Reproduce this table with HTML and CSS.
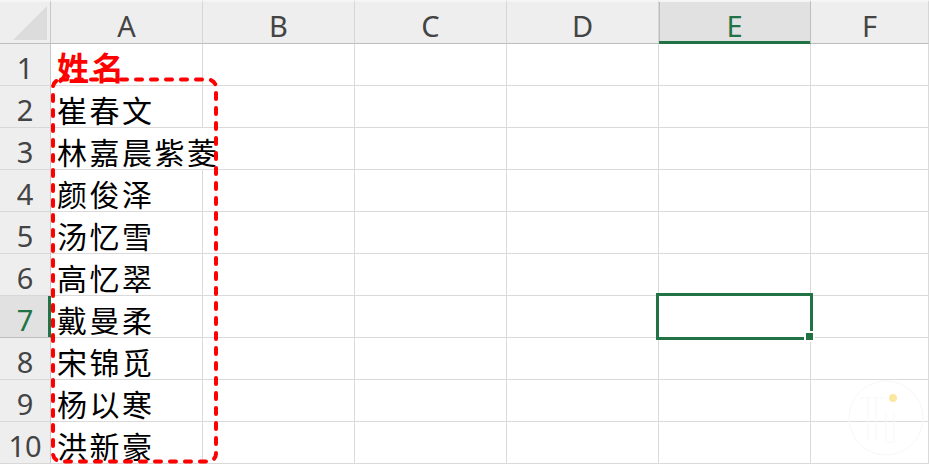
FILE: index.html
```html
<!DOCTYPE html>
<html lang="zh-CN">
<head>
<meta charset="utf-8">
<title>Sheet</title>
<link rel="stylesheet" href="styles.css">
</head>
<body>
<div class="sheet">
  <div class="grid">
    <div class="corner"><span class="tri"></span></div>
    <div class="colh">A</div>
    <div class="colh">B</div>
    <div class="colh">C</div>
    <div class="colh">D</div>
    <div class="colh colh-active">E</div>
    <div class="colh">F</div>

    <div class="rowh">1</div><div class="cell"><span class="title">姓名</span></div><div class="cell"></div><div class="cell"></div><div class="cell"></div><div class="cell"></div><div class="cell"></div>
    <div class="rowh">2</div><div class="cell"><span class="name">崔春文</span></div><div class="cell"></div><div class="cell"></div><div class="cell"></div><div class="cell"></div><div class="cell"></div>
    <div class="rowh">3</div><div class="cell cell-over"><span class="name">林嘉晨紫菱</span></div><div class="cell"></div><div class="cell"></div><div class="cell"></div><div class="cell"></div><div class="cell"></div>
    <div class="rowh">4</div><div class="cell"><span class="name">颜俊泽</span></div><div class="cell"></div><div class="cell"></div><div class="cell"></div><div class="cell"></div><div class="cell"></div>
    <div class="rowh">5</div><div class="cell"><span class="name">汤忆雪</span></div><div class="cell"></div><div class="cell"></div><div class="cell"></div><div class="cell"></div><div class="cell"></div>
    <div class="rowh">6</div><div class="cell"><span class="name">高忆翠</span></div><div class="cell"></div><div class="cell"></div><div class="cell"></div><div class="cell"></div><div class="cell"></div>
    <div class="rowh rowh-active">7</div><div class="cell"><span class="name">戴曼柔</span></div><div class="cell"></div><div class="cell"></div><div class="cell"></div><div class="cell"></div><div class="cell"></div>
    <div class="rowh">8</div><div class="cell"><span class="name">宋锦觅</span></div><div class="cell"></div><div class="cell"></div><div class="cell"></div><div class="cell"></div><div class="cell"></div>
    <div class="rowh">9</div><div class="cell"><span class="name">杨以寒</span></div><div class="cell"></div><div class="cell"></div><div class="cell"></div><div class="cell"></div><div class="cell"></div>
    <div class="rowh">10</div><div class="cell"><span class="name">洪新豪</span></div><div class="cell"></div><div class="cell"></div><div class="cell"></div><div class="cell"></div><div class="cell"></div>
  </div>

  <div class="selection"></div>
  <div class="handle"></div>

  <svg class="marker" width="929" height="464" viewBox="0 0 929 464">
    <rect x="53" y="79.5" width="163" height="382" rx="8" ry="8" fill="none" stroke="#ff0000" stroke-width="4" stroke-linecap="round" stroke-dasharray="6 9"/>
  </svg>

  <svg class="watermark" width="80" height="80" viewBox="0 0 80 80">
    <circle cx="40" cy="40" r="37" fill="none" stroke="#f7f7f7" stroke-width="1"/>
    <path d="M14 20 H40 M22 20 V62 M30 20 V62 M40 34 V64 H48 V34" fill="none" stroke="#f7f7f7" stroke-width="1"/>
    <circle cx="47" cy="20" r="4" fill="#fbe7a0"/>
  </svg>
</div>
</body>
</html>
```

FILE: styles.css
```css
* { box-sizing: border-box; }

html, body {
  margin: 0;
  padding: 0;
  background: #ffffff;
}

.sheet {
  position: relative;
  width: 929px;
  height: 464px;
  overflow: hidden;
  background: #ffffff;
}

.grid {
  display: grid;
  grid-template-columns: 51px repeat(5, 152px) 1fr;
  grid-template-rows: 44px repeat(10, 42px);
  width: 929px;
}

.corner {
  position: relative;
  background: #eeeeee;
  border-top: 2px solid #f5f5f5;
  border-right: 1px solid #c8c8c8;
  border-bottom: 1px solid #bdbdbd;
}

.tri {
  position: absolute;
  left: 13px;
  top: 4px;
  width: 0;
  height: 0;
  border-left: 34px solid transparent;
  border-bottom: 34px solid #dcdcdc;
}

.colh {
  display: flex;
  align-items: center;
  justify-content: center;
  padding-top: 5px;
  background: #eeeeee;
  border-top: 2px solid #f5f5f5;
  border-right: 1px solid #d6d6d6;
  border-bottom: 1px solid #bdbdbd;
  font-family: "Noto Sans", "Liberation Sans", sans-serif;
  font-size: 29px;
  color: #444444;
}

.colh-active {
  background: #e1e1e1;
  color: #217346;
  border-right-color: #bdbdbd;
  border-bottom-color: #217346;
  box-shadow: inset 0 -2px 0 #217346, inset 1px 0 0 #bdbdbd;
}

.rowh {
  display: flex;
  align-items: center;
  justify-content: center;
  padding-top: 5px;
  background: #eeeeee;
  border-right: 1px solid #c8c8c8;
  border-bottom: 1px solid #d8d8d8;
  font-family: "Noto Sans", "Liberation Sans", sans-serif;
  font-size: 29px;
  color: #444444;
}

.rowh-active {
  background: #e1e1e1;
  color: #217346;
  border-right-color: #217346;
  border-bottom-color: #bdbdbd;
  box-shadow: inset -2px 0 0 #217346;
}

.cell {
  display: flex;
  align-items: flex-end;
  padding: 0 0 3px 6px;
  border-right: 1px solid #dadada;
  border-bottom: 1px solid #dadada;
  overflow: visible;
  white-space: nowrap;
}

.cell-over {
  border-right-color: transparent;
}

.name {
  font-family: "Noto Sans CJK SC", "Noto Sans", sans-serif;
  font-size: 30px;
  font-weight: 400;
  line-height: 1;
  letter-spacing: 2.5px;
  color: #000000;
}

.title {
  font-family: "Noto Sans CJK SC", "Noto Sans", sans-serif;
  font-size: 32px;
  line-height: 1;
  font-weight: 700;
  letter-spacing: 3px;
  color: #ff0000;
}

.selection {
  position: absolute;
  left: 656px;
  top: 293px;
  width: 157px;
  height: 47px;
  border: 3px solid #217346;
}

.handle {
  position: absolute;
  left: 804px;
  top: 331px;
  width: 11px;
  height: 11px;
  background: #217346;
  border: 2px solid #ffffff;
}

.marker {
  position: absolute;
  left: 0;
  top: 0;
  pointer-events: none;
}

.watermark {
  position: absolute;
  left: 846px;
  top: 378px;
  pointer-events: none;
}
```
